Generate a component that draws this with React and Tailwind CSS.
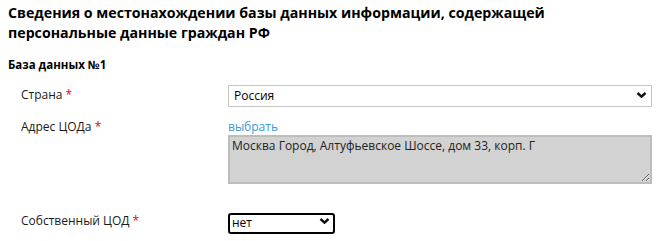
import React from "react";

function Chevron() {
  return (
    <svg
      className="pointer-events-none absolute right-[5px] top-1/2 -translate-y-1/2"
      width="11"
      height="7"
      viewBox="0 0 11 7"
    >
      <path d="M1.5 1.5 L5.5 5.2 L9.5 1.5" fill="none" stroke="#111" strokeWidth="2.4" />
    </svg>
  );
}

function Label({ children }) {
  return (
    <div className="w-[220px] pl-[13px] text-[12px] leading-[16px] text-[#1a1a1a]">
      {children} <span className="text-[#e00]">*</span>
    </div>
  );
}

export default function App() {
  return (
    <div className="min-h-screen w-[667px] bg-white font-['Open_Sans',sans-serif] text-[#111]">
      <div className="px-2 pt-[3px]">
        {/* Заголовок */}
        <h2 className="text-[14.2px] font-bold leading-[20px] text-black">
          Сведения о местонахождении базы данных информации, содержащей
          <br />
          персональные данные граждан РФ
        </h2>
        <h3 className="mt-[14px] text-[11.5px] font-bold leading-[16px] text-black">База данных №1</h3>

        {/* Страна */}
        <div className="mt-[9px] flex items-center">
          <Label>Страна</Label>
          <div className="relative w-[424px]">
            <select
              className="h-[22px] w-full appearance-none border border-[#c4c4c4] bg-white pl-[5px] text-[12px] leading-[18px] text-black outline-none"
              defaultValue="ru"
            >
              <option value="ru">Россия</option>
            </select>
            <Chevron />
          </div>
        </div>

        {/* Адрес ЦОДа */}
        <div className="mt-[12px] flex items-start">
          <Label>Адрес ЦОДа</Label>
          <div className="w-[424px]">
            <a href="#" className="block text-[12px] leading-[16px] text-[#3a9ad9]">
              выбрать
            </a>
            <textarea
              readOnly
              className="block h-[49px] w-full resize-y border-2 border-[#bdbdbd] bg-[#d2d2d2] px-[2px] py-0 text-[12px] leading-[17px] text-[#222] outline-none"
              defaultValue="Москва Город, Алтуфьевское Шоссе, дом 33, корп. Г"
            />
          </div>
        </div>

        {/* Собственный ЦОД */}
        <div className="mt-[25px] flex items-center">
          <Label>Собственный ЦОД</Label>
          <div className="relative w-[107px]">
            <select
              className="h-[21px] w-full appearance-none rounded-[3px] border-2 border-black bg-white pl-[2px] text-[12px] leading-[16px] text-black outline-none"
              defaultValue="no"
            >
              <option value="no">нет</option>
              <option value="yes">да</option>
            </select>
            <Chevron />
          </div>
        </div>
      </div>
    </div>
  );
}
